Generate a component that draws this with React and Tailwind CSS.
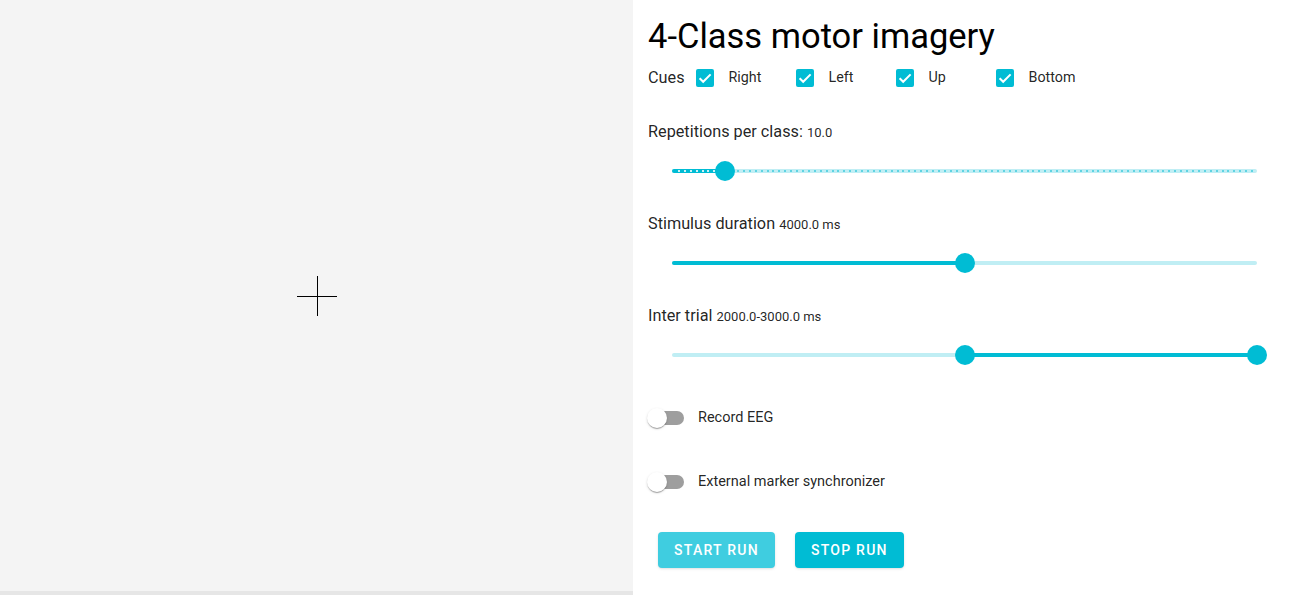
import React from 'react'

function Check({ label }) {
  return (
    <div className="flex items-center w-[100px]">
      <span className="w-[18px] h-[18px] rounded-[2px] bg-[#00bcd4] flex items-center justify-center shrink-0">
        <svg width="18" height="18" viewBox="0 0 18 18">
          <path d="M3.6 9.2l3.6 3.6L14.6 5.4" fill="none" stroke="#fff" strokeWidth="2" />
        </svg>
      </span>
      <span className="ml-[15px] text-[14.3px] text-black/[0.87]">{label}</span>
    </div>
  )
}

function Slider({ from = 0, to, marks = 0 }) {
  const dots = []
  for (let i = 1; i < marks; i++) dots.push(i / marks)
  return (
    <div className="relative ml-[24px] w-[585px] h-[40px]">
      <div className="absolute left-0 right-0 top-[18px] h-[4px] rounded-full bg-[#c0eef4]" />
      <div
        className="absolute top-[18px] h-[4px] rounded-full bg-[#00bcd4]"
        style={{ left: `${from * 100}%`, width: `${(to - from) * 100}%` }}
      />
      {dots.map(p => (
        <span
          key={p}
          className={`absolute top-[19px] w-[2px] h-[2px] ${p >= from && p <= to ? 'bg-white/80' : 'bg-[#5fd3e2]'}`}
          style={{ left: `${p * 100}%` }}
        />
      ))}
      {(from > 0 ? [from, to] : [to]).map(p => (
        <span
          key={p}
          className="absolute top-[10px] -ml-[10px] w-[20px] h-[20px] rounded-full bg-[#00bcd4]"
          style={{ left: `${p * 100}%` }}
        />
      ))}
    </div>
  )
}

function Toggle({ label }) {
  return (
    <div className="flex items-center h-[38px]">
      <div className="relative w-[36px] h-[20px] shrink-0">
        <div className="absolute left-[2px] top-[3px] w-[34px] h-[14px] rounded-full bg-[#9e9e9e]" />
        <div className="absolute left-[-1px] top-0 w-[20px] h-[20px] rounded-full bg-white shadow-[0_2px_1px_-1px_rgba(0,0,0,0.2),0_1px_1px_0_rgba(0,0,0,0.14),0_1px_3px_0_rgba(0,0,0,0.12)]" />
      </div>
      <span className="ml-[14px] text-[14.5px] text-black/[0.87]">{label}</span>
    </div>
  )
}

function Label({ title, value }) {
  return (
    <p className="text-[16.25px] leading-[24px] text-black/[0.87]">
      {title} <span className="text-[13px]">{value}</span>
    </p>
  )
}

export default function App() {
  return (
    <div className="flex w-[1294px] h-[595px] bg-white font-['Roboto',sans-serif]">
      {/* stimulus canvas */}
      <div className="w-[633px] flex flex-col shrink-0">
        <div className="flex-1 bg-[#f4f4f4] flex items-center justify-center">
          <svg width="40" height="40" viewBox="0 0 40 40">
            <path d="M0 20.5H40M20.5 0V40" stroke="#000" strokeWidth="1" />
          </svg>
        </div>
        <div className="h-[4px] bg-[#e6e6e6]" />
      </div>

      {/* settings */}
      <div className="flex-1 pl-[15px] pt-[15px]">
        <h1 className="text-[34.5px] leading-[42px] text-black">4-Class motor imagery</h1>

        <div className="flex items-center h-[42px]">
          <span className="text-[16.25px] text-black/[0.87] mr-[11px]">Cues</span>
          <Check label="Right" />
          <Check label="Left" />
          <Check label="Up" />
          <Check label="Bottom" />
        </div>

        <div className="mt-[21px]">
          <Label title="Repetitions per class:" value="10.0" />
        </div>
        <div className="mt-[6px]">
          <Slider to={9 / 99} marks={99} />
        </div>

        <div className="mt-[21px]">
          <Label title="Stimulus duration" value="4000.0 ms" />
        </div>
        <div className="mt-[6px]">
          <Slider to={0.5} />
        </div>

        <div className="mt-[21px]">
          <Label title="Inter trial" value="2000.0-3000.0 ms" />
        </div>
        <div className="mt-[6px]">
          <Slider from={0.5} to={1} />
        </div>

        <div className="mt-[24px]">
          <Toggle label="Record EEG" />
        </div>
        <div className="mt-[26px]">
          <Toggle label="External marker synchronizer" />
        </div>

        <div className="mt-[31px] ml-[10px] flex gap-[20px]">
          <button className="h-[36px] px-[16px] rounded-[4px] bg-[#3fcde0] text-white text-[14px] font-medium tracking-[0.09em] shadow-sm">
            START RUN
          </button>
          <button className="h-[36px] px-[16px] rounded-[4px] bg-[#00bcd4] text-white text-[14px] font-medium tracking-[0.09em] shadow-sm">
            STOP RUN
          </button>
        </div>
      </div>
    </div>
  )
}
